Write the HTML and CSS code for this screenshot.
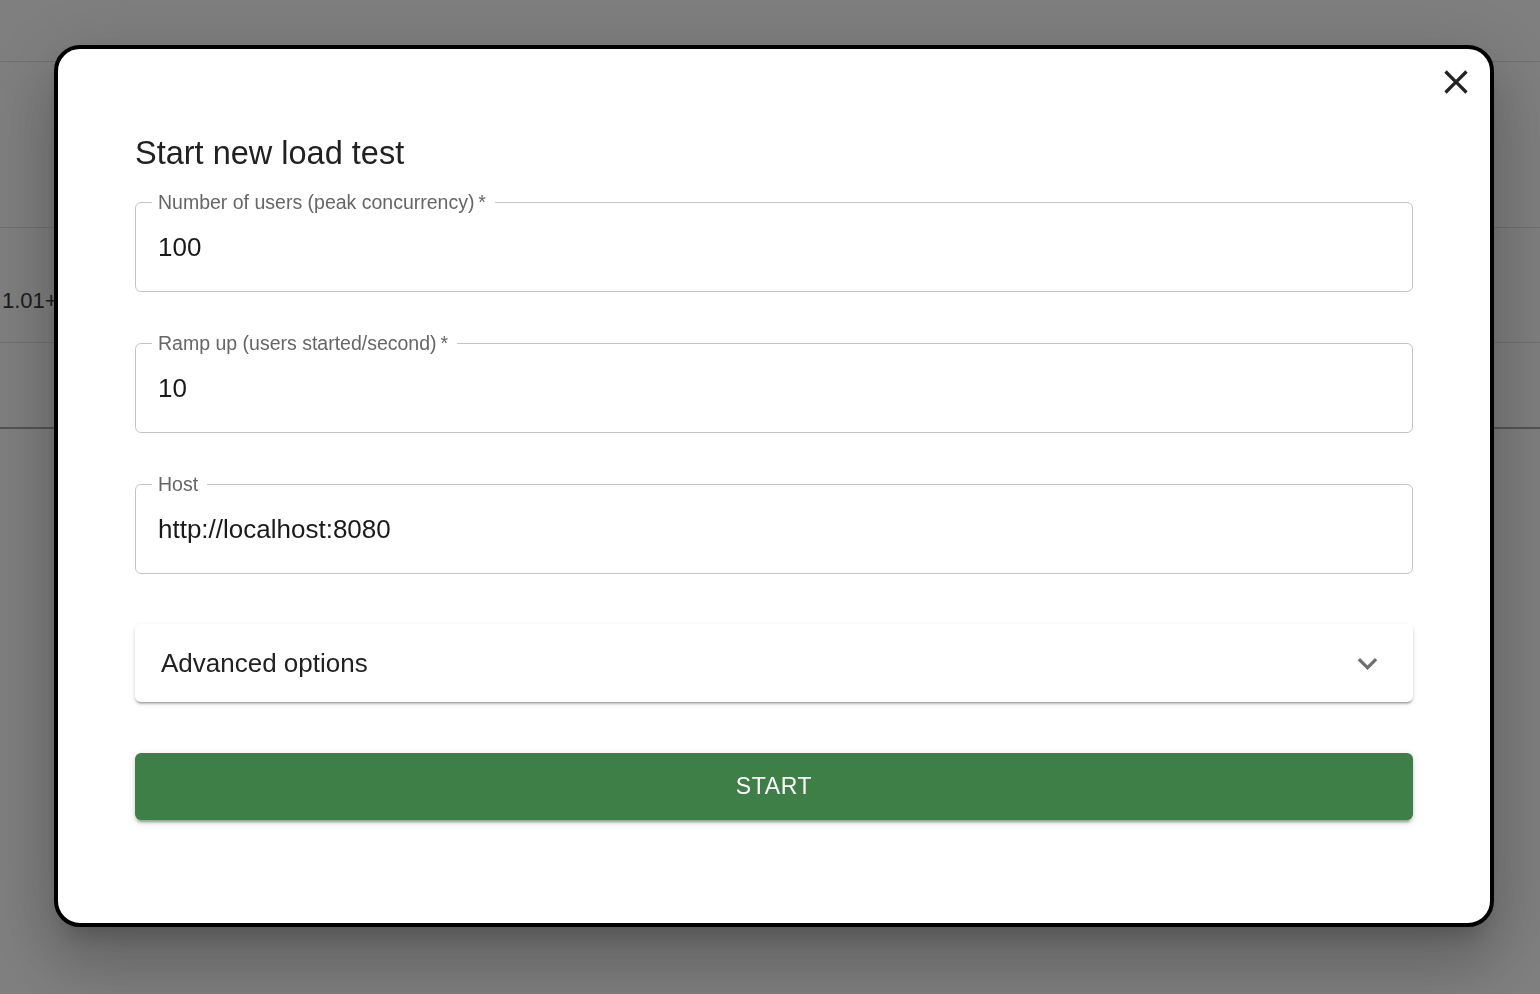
FILE: index.html
```html
<!DOCTYPE html>
<html lang="en">
<head>
  <meta charset="UTF-8" />
  <meta name="viewport" content="width=device-width, initial-scale=1.0"/>
  <title>Locust</title>
  <link rel="stylesheet" href="styles.css">
</head>
<body>
  <div class="page">
    <div class="topbar"></div>
    <div class="stats-head"></div>
    <div class="stats-row"><span class="cell">1.01+</span></div>
    <div class="stats-row last"></div>
  </div>

  <div class="backdrop">
    <div class="dialog">
      <button class="close-btn" aria-label="close">
        <svg viewBox="0 0 24 24" width="40" height="40"><path d="M19 6.41 17.59 5 12 10.59 6.41 5 5 6.41 10.59 12 5 17.59 6.41 19 12 13.41 17.59 19 19 17.59 13.41 12z"/></svg>
      </button>

      <h2 class="dialog-title">Start new load test</h2>

      <form class="form">
        <fieldset class="field">
          <legend>Number of users (peak concurrency)&thinsp;*</legend>
          <input type="text" value="100">
        </fieldset>
        <fieldset class="field">
          <legend>Ramp up (users started/second)&thinsp;*</legend>
          <input type="text" value="10">
        </fieldset>
        <fieldset class="field">
          <legend>Host</legend>
          <input type="text" value="http://localhost:8080">
        </fieldset>

        <div class="accordion">
          <span>Advanced options</span>
          <svg viewBox="0 0 24 24" width="39" height="39"><path d="M16.59 8.59 12 13.17 7.41 8.59 6 10l6 6 6-6z"/></svg>
        </div>

        <button type="button" class="start-btn">START</button>
      </form>
    </div>
  </div>
</body>
</html>
```
FILE: styles.css
```css
body {
  margin: 0;
  font-family: 'Liberation Sans', Arial, sans-serif;
  background: #fff;
  color: #212121;
}
.topbar {
  height: 61px;
  border-bottom: 1px solid #e0e0e0;
}
.stats-head {
  height: 165px;
  border-bottom: 1px solid #e0e0e0;
}
.stats-row {
  height: 114px;
  border-bottom: 1px solid #e0e0e0;
  display: flex;
  align-items: center;
}
.stats-row.last {
  height: 84px;
  border-bottom: 2px solid #a8a8a8;
}
.cell {
  font-size: 22px;
  color: #3a3a3a;
  padding: 32px 0 0 2px;
}
.backdrop {
  position: fixed;
  inset: 0;
  background: rgba(0,0,0,0.5);
  display: flex;
  align-items: flex-start;
  padding: 45px 0 0 54px;
}
.dialog {
  position: relative;
  box-sizing: border-box;
  width: 1440px;
  background: #fff;
  border: 4px solid #000;
  border-radius: 26px;
  padding: 85px 77px 103px;
  box-shadow: 0 18px 24px -11px rgba(0,0,0,0.2), 0 39px 62px 5px rgba(0,0,0,0.14), 0 15px 75px 13px rgba(0,0,0,0.12);
}
.close-btn {
  position: absolute;
  top: 13px;
  right: 14px;
  width: 40px;
  height: 40px;
  padding: 0;
  border: none;
  background: none;
  fill: #222;
  cursor: pointer;
}
.close-btn svg {
  display: block;
}
.dialog-title {
  margin: 0 0 18px;
  font-size: 32.5px;
  font-weight: 400;
  line-height: 39px;
  color: #212121;
}
.form {
  display: flex;
  flex-direction: column;
}
.field {
  margin: 0 0 40px;
  padding: 0 16px;
  border: 1px solid #c4c4c4;
  border-radius: 6px;
  height: 101px;
  box-sizing: border-box;
  min-width: 0;
}
.field legend {
  padding: 0 9px 0 6px;
  font-size: 19.5px;
  line-height: 22px;
  color: #666;
}
.field input {
  display: block;
  box-sizing: border-box;
  width: 100%;
  height: 34px;
  margin-top: 17px;
  padding: 0 6px;
  border: none;
  outline: none;
  background: none;
  font-family: inherit;
  font-size: 26px;
  color: #1a1a1a;
}
.field:last-of-type {
  margin-bottom: 50px;
}
.accordion {
  height: 78px;
  display: flex;
  align-items: center;
  justify-content: space-between;
  padding: 0 26px;
  border-radius: 6px;
  background: #fff;
  font-size: 26px;
  color: #212121;
  fill: #6e6e6e;
  box-shadow: 0 3px 2px -2px rgba(0,0,0,0.2), 0 2px 2px 0 rgba(0,0,0,0.14), 0 2px 5px 0 rgba(0,0,0,0.12);
}
.accordion svg {
  display: block;
}
.start-btn {
  margin-top: 51px;
  height: 67px;
  border: none;
  border-radius: 6px;
  background: #3d7f46;
  color: #fff;
  font-family: inherit;
  font-size: 23px;
  letter-spacing: 0.65px;
  cursor: pointer;
  box-shadow: 0 5px 2px -3px rgba(0,0,0,0.2), 0 3px 3px 0 rgba(0,0,0,0.14), 0 2px 8px 0 rgba(0,0,0,0.12);
}
```
